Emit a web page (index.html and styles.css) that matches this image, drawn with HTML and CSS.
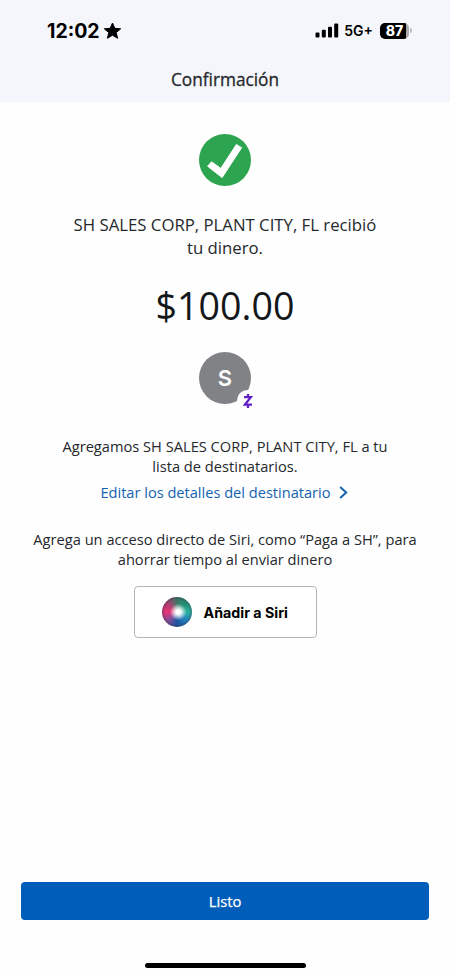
FILE: index.html
```html
<!DOCTYPE html>
<html lang="es">
<head>
<meta charset="utf-8">
<title>Confirmación</title>
<link rel="stylesheet" href="styles.css">
</head>
<body>
<main class="screen">
  <header class="header">
    <div class="status">
      <div class="status-left">
        <span class="time">12:02</span>
        <svg class="star" width="19" height="18" viewBox="0 0 19 18"><path d="M9.500 1l2.300 5.300 5.900.5-4.500 3.800 1.400 5.700-5.100-3.100-5.100 3.100 1.400-5.700L1.300 6.800l5.900-.5z" fill="#000" stroke="#000" stroke-width="1" stroke-linejoin="round"/></svg>
      </div>
      <div class="status-right">
        <svg class="signal" width="24" height="15" viewBox="0 0 24 15"><rect x="0.500" y="9.500" width="4" height="5" rx="1"/><rect x="6.800" y="6.800" width="4" height="7.700" rx="1"/><rect x="13" y="3.800" width="4" height="10.700" rx="1"/><rect x="19.200" y="0.500" width="4" height="14" rx="1"/></svg>
        <span class="network">5G+</span>
        <div class="battery"><span class="level">87</span></div>
        <span class="battery-tip"></span>
      </div>
    </div>
    <h1 class="title">Confirmación</h1>
  </header>
  <section class="content">
    <svg class="check" width="52" height="52" viewBox="0 0 52 52"><circle cx="26" cy="26" r="26" fill="#2da450"/><path d="M8.600 32.200l4-4.400 9.200 6.600L37.400 10.500l5.200 3.200L23.100 43.600z" fill="#fff" stroke="#fff" stroke-width="1" stroke-linejoin="round"/></svg>
    <p class="received">SH SALES CORP, PLANT CITY, FL recibió<br>tu dinero.</p>
    <p class="amount">$100.00</p>
    <div class="avatar">S
      <span class="badge"><svg width="10" height="16" viewBox="0 0 10 16"><path d="M1 4.200h6.800L2 11.600h7M5 1v3M5 12v3" fill="none" stroke="#6420c8" stroke-width="2.300"/></svg></span>
    </div>
    <p class="added">Agregamos SH SALES CORP, PLANT CITY, FL a tu<br>lista de destinatarios.</p>
    <a class="edit"><span class="edit-label">Editar los detalles del destinatario</span><svg width="9" height="13" viewBox="0 0 9 13"><path d="M1.200 1l6 5.500-6 5.500" fill="none" stroke="#1562b0" stroke-width="2"/></svg></a>
    <p class="shortcut">Agrega un acceso directo de Siri, como “Paga a SH”, para<br>ahorrar tiempo al enviar dinero</p>
    <button class="siri"><span class="orb"></span><span class="siri-label">Añadir a Siri</span></button>
  </section>
  <footer class="footer">
    <button class="done">Listo</button>
    <div class="home"></div>
  </footer>
</main>
</body>
</html>
```
FILE: styles.css
```css
* { box-sizing: border-box; }
body { margin: 0; background: #fefefe; }
p, h1 { margin: 0; }
.screen {
  width: 450px;
  height: 976px;
  display: flex;
  flex-direction: column;
  font-family: "Open Sans", "Noto Sans", sans-serif;
  color: #25282c;
  white-space: nowrap;
  overflow: hidden;
}
.header { height: 102px; background: #f5f6fb; flex: none; }
.status {
  height: 61px;
  padding: 0 38px 0 47px;
  display: flex;
  align-items: center;
  justify-content: space-between;
  font-family: Inter, "Liberation Sans", sans-serif;
  color: #000;
}
.status-left, .status-right { display: flex; align-items: center; }
.time { font-size: 19.500px; font-weight: 700; line-height: 24px; }
.star { margin-left: 3px; }
.signal { margin-right: 5px; }
.network { font-size: 14px; font-weight: 600; line-height: 20px; padding-top: 1px; }
.battery {
  width: 29px;
  height: 16px;
  margin-left: 7px;
  border-radius: 5px;
  background: linear-gradient(90deg, #000 26px, #a9aaad 26px);
}
.level { display: block; width: 29px; text-align: center; color: #fff; font-size: 14px; font-weight: 800; line-height: 16px; }
.battery-tip { width: 2px; height: 5px; margin-left: 1px; border-radius: 0 2px 2px 0; background: #b9babd; }
.title { text-align: center; font-size: 17.250px; font-weight: 500; line-height: 24px; padding-top: 7px; -webkit-text-stroke: 0.300px currentColor; }
.content { display: flex; flex-direction: column; align-items: center; text-align: center; padding-top: 32px; }
.received { margin-top: 27px; font-size: 16.750px; line-height: 23px; }
.amount { margin-top: 22px; font-size: 37.600px; line-height: 50px; color: #14171a; }
.avatar {
  position: relative;
  width: 52px;
  height: 52px;
  margin-top: 21px;
  border-radius: 50%;
  background: #808285;
  color: #fff;
  font-family: Inter, sans-serif;
  font-size: 22px;
  font-weight: 600;
  line-height: 53px;
}
.badge {
  position: absolute;
  left: 38px;
  top: 38px;
  width: 21px;
  height: 21px;
  border-radius: 50%;
  background: #fefefe;
  display: flex;
  align-items: center;
  justify-content: center;
}
.added { margin-top: 32px; font-size: 14.650px; line-height: 20px; }
.edit { margin-top: 6px; margin-right: 2px; display: flex; align-items: center; gap: 8px; font-size: 14.600px; line-height: 20px; color: #1562b0; }
.shortcut { margin-top: 27px; font-size: 14.650px; line-height: 20px; }
.siri {
  width: 183px;
  height: 52px;
  margin-top: 17px;
  padding: 0 0 0 27px;
  display: flex;
  align-items: center;
  border: 1px solid #b5b5b5;
  border-radius: 4px;
  background: #fff;
  color: #000;
}
.orb {
  width: 30px;
  height: 30px;
  border-radius: 50%;
  background:
    radial-gradient(circle at 54% 50%, #fff 0 9%, rgba(255,255,255,.8) 16%, rgba(255,255,255,0) 38%),
    radial-gradient(circle, transparent 55%, rgba(40,40,60,.35) 70%),
    conic-gradient(#3c7668, #209075 45deg, #2bb2a2 90deg, #2386bc 130deg, #1d52a0 180deg, #874d99 225deg, #e73476 270deg, #b53d70 310deg, #3c7668);
}
.siri-label { margin-left: 12px; font-family: Inter, sans-serif; font-size: 14.250px; font-weight: 700; }
.footer { margin-top: auto; height: 94px; display: flex; flex-direction: column; align-items: center; flex: none; }
.done {
  width: 408px;
  height: 38px;
  padding: 0;
  border: 0;
  border-radius: 4px;
  background: #005db9;
  color: #fff;
  font: 500 14.750px/38px "Open Sans", sans-serif;
  -webkit-text-stroke: 0.250px currentColor;
}
.home { width: 161px; height: 5px; margin-top: 42.500px; border-radius: 3px; background: #000; }
```
